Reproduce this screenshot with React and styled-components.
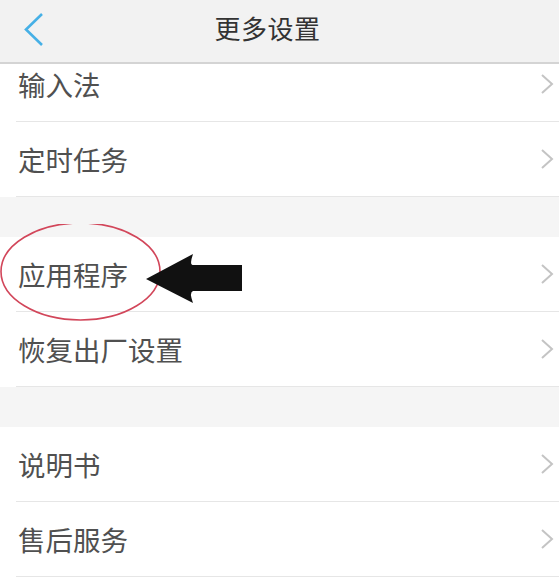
import styled, { createGlobalStyle } from 'styled-components'

const GlobalStyle = createGlobalStyle`
  html, body {
    margin: 0;
    padding: 0;
    background: #fff;
  }
  body {
    font-family: "Noto Sans CJK SC", "Noto Sans", sans-serif;
  }
`

const sections = [
  ['输入法', '定时任务'],
  ['应用程序', '恢复出厂设置'],
  ['说明书', '售后服务']
]

const Page = styled.div`
  width: 559px;
  height: 582px;
  overflow: hidden;
  display: flex;
  flex-direction: column;
  background: #fff;
`

const Header = styled.header`
  position: relative;
  z-index: 1;
  flex: 0 0 auto;
  height: 64px;
  box-sizing: border-box;
  padding-bottom: 8px;
  padding-right: 24px;
  display: flex;
  align-items: center;
  justify-content: center;
  background: #f2f2f2;
  border-bottom: 2px solid #d4d4d4;
`

const BackButton = styled.button`
  position: absolute;
  left: 20px;
  top: 10px;
  width: 26px;
  height: 38px;
  padding: 0;
  border: none;
  background: none;
  display: flex;
  align-items: center;
  justify-content: center;
`

const Title = styled.h1`
  margin: 0;
  font-size: 26px;
  font-weight: 400;
  color: #333;
  letter-spacing: 0.5px;
`

const Scroll = styled.div`
  flex: 1;
  overflow: hidden;
`

const Content = styled.div`
  margin-top: -17px;
`

const Gap = styled.div`
  height: 40px;
  background: #f5f5f5;
`

const Section = styled.section`
  background: #fff;
`

const Row = styled.div`
  position: relative;
  box-sizing: border-box;
  height: 75px;
  display: flex;
  align-items: center;
  justify-content: space-between;
  margin-left: 16px;
  padding-right: 5px;
  border-bottom: 1px solid #e6e6e6;
`

const Label = styled.span`
  font-size: 27.5px;
  color: #505050;
  margin-left: 2px;
`

const Annotation = styled.svg`
  position: absolute;
  left: -16px;
  top: -13px;
  pointer-events: none;
`

function Chevron() {
  return (
    <svg width="14" height="22" viewBox="0 0 14 22">
      <path d="M2 2 L12 11 L2 20" fill="none" stroke="#c4c4c4" strokeWidth="2" />
    </svg>
  )
}

function Marker() {
  return (
    <Annotation width="250" height="100" viewBox="0 0 250 100">
      <ellipse cx="80.5" cy="47.5" rx="79.5" ry="48.5" fill="none" stroke="#d2465a" strokeWidth="1.6" />
      <path d="M146 55 L193 30 Q189 42 193 41 L242 41 L242 67 L193 67 Q189 68 193 79 Z" fill="#111" />
    </Annotation>
  )
}

export default function App() {
  return (
    <>
      <GlobalStyle />
      <Page>
        <Header>
          <BackButton aria-label="返回">
            <svg width="22" height="36" viewBox="0 0 22 36">
              <path d="M20 3 L4 18.5 L20 34" fill="none" stroke="#46b0e6" strokeWidth="2.6" />
            </svg>
          </BackButton>
          <Title>更多设置</Title>
        </Header>
        <Scroll>
          <Content>
            {sections.map((items, i) => (
              <div key={i}>
                {i > 0 && <Gap />}
                <Section>
                  {items.map(name => (
                    <Row key={name}>
                      <Label>{name}</Label>
                      <Chevron />
                      {name === '应用程序' && <Marker />}
                    </Row>
                  ))}
                </Section>
              </div>
            ))}
          </Content>
        </Scroll>
      </Page>
    </>
  )
}
